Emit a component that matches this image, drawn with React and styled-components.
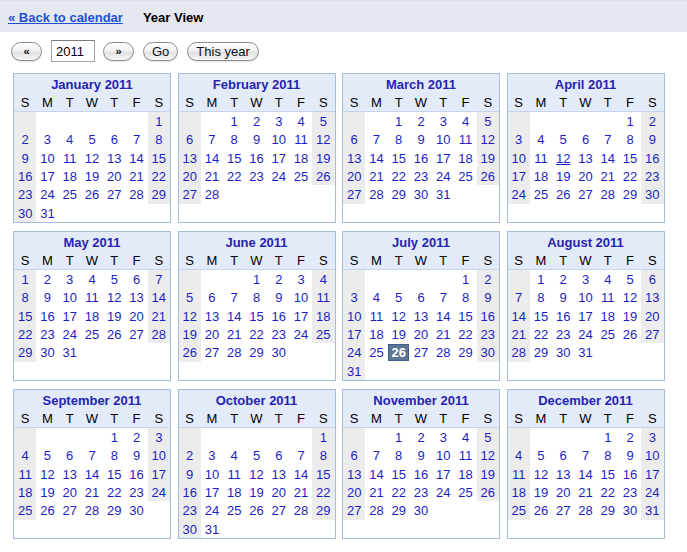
import React from 'react';
import styled, { createGlobalStyle } from 'styled-components';

const GlobalStyle = createGlobalStyle`
  body {
    margin: 0;
    background: #fff;
    font-family: 'Liberation Sans', Arial, Helvetica, sans-serif;
    font-size: 13px;
    color: #000;
  }
`;

const MONTHS = [
  'January', 'February', 'March', 'April', 'May', 'June',
  'July', 'August', 'September', 'October', 'November', 'December',
];
const WEEKDAYS = ['S', 'M', 'T', 'W', 'T', 'F', 'S'];
const YEAR = 2011;
const TODAY = { month: 6, day: 26 };
const HOVERED = { month: 3, day: 12 };

const TopBar = styled.div`
  display: flex;
  align-items: center;
  gap: 20px;
  height: 30px;
  padding: 1px 8px 0;
  background: #e5e8ee;
  border-top: 1px solid #dcdfe4;
`;

const BackLink = styled.a`
  color: #1d50d8;
  font-weight: bold;
  text-decoration: underline;
  cursor: pointer;
`;

const ViewTitle = styled.span`
  font-weight: bold;
  color: #000;
`;

const Toolbar = styled.div`
  display: flex;
  align-items: center;
  gap: 8px;
  padding: 8px 11px 0;
  height: 22px;
`;

const PillButton = styled.button`
  height: 19px;
  min-width: ${(p) => (p.$narrow ? '31px' : 'auto')};
  padding: 0 ${(p) => (p.$narrow ? '0' : '8px')};
  border: 1px solid #8d8d8d;
  border-radius: 10px;
  background: linear-gradient(#ffffff 0%, #f1f1f1 45%, #e2e2e2 55%, #f6f6f6 100%);
  font-family: 'Liberation Sans', Arial, sans-serif;
  font-size: ${(p) => (p.$narrow ? '11px' : '13px')};
  font-weight: ${(p) => (p.$narrow ? 'bold' : 'normal')};
  color: #111;
  line-height: 17px;
  box-shadow: 0 1px 1px rgba(0, 0, 0, 0.12);
  margin-right: 1px;
`;

const YearInput = styled.input`
  box-sizing: border-box;
  width: 44px;
  height: 22px;
  padding: 0 4px;
  border: 1px solid #a5a5a5;
  border-top-color: #7c7c7c;
  font-family: 'Liberation Sans', Arial, sans-serif;
  font-size: 13px;
  color: #000;
`;

const MonthGrid = styled.div`
  display: grid;
  grid-template-columns: repeat(4, 158px);
  grid-auto-rows: 150px;
  column-gap: 6.5px;
  row-gap: 8px;
  padding: 11px 13px 0;
`;

const MonthBox = styled.div`
  box-sizing: border-box;
  border: 1px solid #a6bcd7;
  background: #fff;
  display: flex;
  flex-direction: column;
`;

const MonthHead = styled.div`
  background: #e4ebf8;
  border-bottom: 1px solid #c4d4ee;
`;

const MonthTitle = styled.div`
  height: 19px;
  line-height: 22px;
  text-align: center;
  font-weight: bold;
  color: #2424b4;
`;

const WeekRow = styled.div`
  display: grid;
  grid-template-columns: repeat(7, 1fr);
  height: 18px;
  line-height: 19px;
`;

const WeekLetter = styled.span`
  text-align: center;
  color: #000;
`;

const Days = styled.div`
  display: grid;
  grid-template-columns: repeat(7, 1fr);
  grid-auto-rows: 18.33px;
`;

const DayCell = styled.div`
  display: flex;
  align-items: center;
  justify-content: center;
  padding-top: 1px;
  box-sizing: border-box;
  background: ${(p) => (p.$weekend ? '#ececec' : 'transparent')};
`;

const DayLink = styled.a`
  color: #1e1ec0;
  text-decoration: ${(p) => (p.$hover ? 'underline' : 'none')};
  cursor: pointer;
`;

const TodayMark = styled.a`
  box-sizing: border-box;
  width: 21px;
  height: 17px;
  line-height: 15px;
  text-align: center;
  background: #5a7696;
  border: 1px solid #3f5f86;
  color: #fff;
  font-weight: bold;
`;

const buildCells = (month) => {
  const first = new Date(YEAR, month, 1).getDay();
  const count = new Date(YEAR, month + 1, 0).getDate();
  const cells = [];
  for (let i = 0; i < first; i++) cells.push({ key: `b${i}`, wd: i });
  for (let d = 1; d <= count; d++) cells.push({ key: `d${d}`, day: d, wd: (first + d - 1) % 7 });
  return cells;
};

const Month = ({ month }) => (
  <MonthBox>
    <MonthHead>
      <MonthTitle>{MONTHS[month]} {YEAR}</MonthTitle>
      <WeekRow>
        {WEEKDAYS.map((w, i) => (
          <WeekLetter key={i}>{w}</WeekLetter>
        ))}
      </WeekRow>
    </MonthHead>
    <Days>
      {buildCells(month).map((c) => {
        const isToday = month === TODAY.month && c.day === TODAY.day;
        const isHover = month === HOVERED.month && c.day === HOVERED.day;
        return (
          <DayCell key={c.key} $weekend={c.wd === 0 || c.wd === 6}>
            {c.day &&
              (isToday ? (
                <TodayMark>{c.day}</TodayMark>
              ) : (
                <DayLink $hover={isHover}>{c.day}</DayLink>
              ))}
          </DayCell>
        );
      })}
    </Days>
  </MonthBox>
);

const App = () => (
  <>
    <GlobalStyle />
    <TopBar>
      <BackLink>« Back to calendar</BackLink>
      <ViewTitle>Year View</ViewTitle>
    </TopBar>
    <Toolbar>
      <PillButton $narrow>«</PillButton>
      <YearInput defaultValue="2011" />
      <PillButton $narrow>»</PillButton>
      <PillButton>Go</PillButton>
      <PillButton>This year</PillButton>
    </Toolbar>
    <MonthGrid>
      {MONTHS.map((_, m) => (
        <Month key={m} month={m} />
      ))}
    </MonthGrid>
  </>
);

export default App;
